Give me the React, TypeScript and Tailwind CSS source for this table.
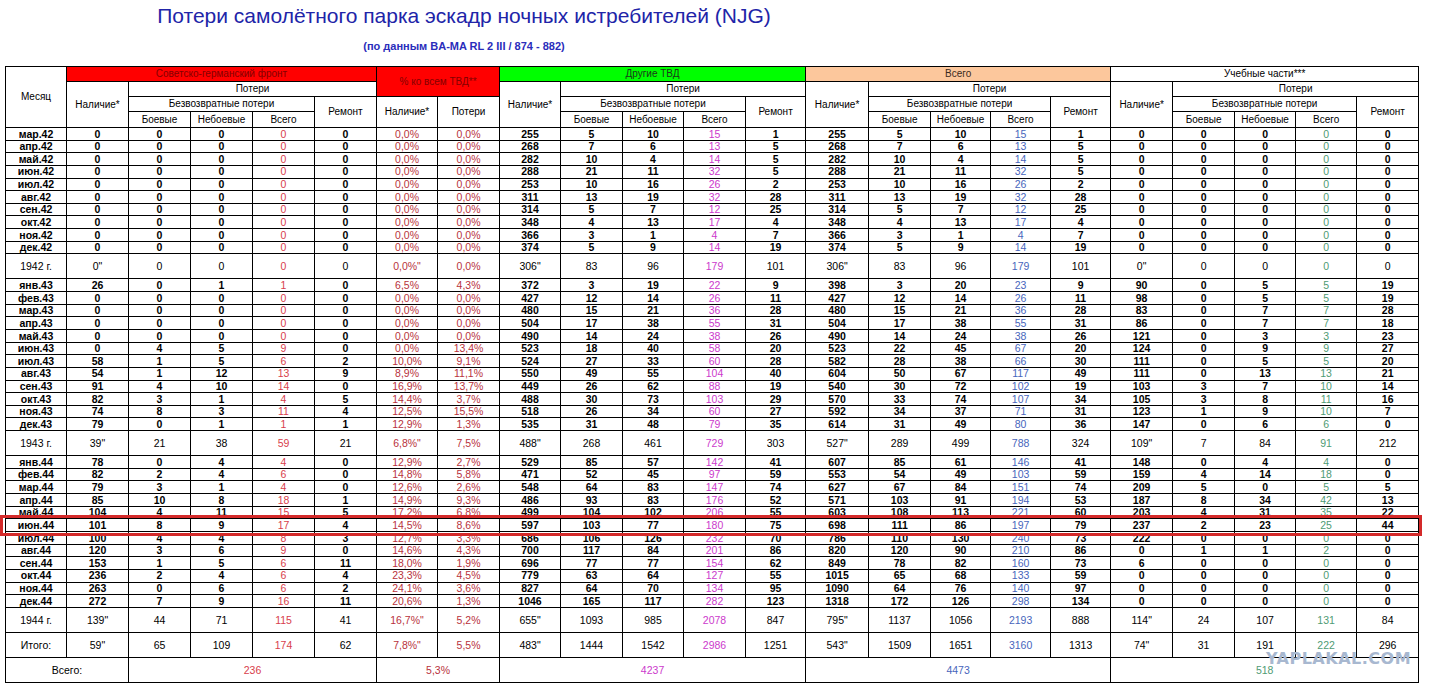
import React from "react"

// month | sov-germ front | % of all | other theatres | total | training units
const raw = `мар.42|0 0 0 0 0|0,0% 0,0%|255 5 10 15 1|255 5 10 15 1|0 0 0 0 0
апр.42|0 0 0 0 0|0,0% 0,0%|268 7 6 13 5|268 7 6 13 5|0 0 0 0 0
май.42|0 0 0 0 0|0,0% 0,0%|282 10 4 14 5|282 10 4 14 5|0 0 0 0 0
июн.42|0 0 0 0 0|0,0% 0,0%|288 21 11 32 5|288 21 11 32 5|0 0 0 0 0
июл.42|0 0 0 0 0|0,0% 0,0%|253 10 16 26 2|253 10 16 26 2|0 0 0 0 0
авг.42|0 0 0 0 0|0,0% 0,0%|311 13 19 32 28|311 13 19 32 28|0 0 0 0 0
сен.42|0 0 0 0 0|0,0% 0,0%|314 5 7 12 25|314 5 7 12 25|0 0 0 0 0
окт.42|0 0 0 0 0|0,0% 0,0%|348 4 13 17 4|348 4 13 17 4|0 0 0 0 0
ноя.42|0 0 0 0 0|0,0% 0,0%|366 3 1 4 7|366 3 1 4 7|0 0 0 0 0
дек.42|0 0 0 0 0|0,0% 0,0%|374 5 9 14 19|374 5 9 14 19|0 0 0 0 0
1942 г.|0" 0 0 0 0|0,0%" 0,0%|306" 83 96 179 101|306" 83 96 179 101|0" 0 0 0 0
янв.43|26 0 1 1 0|6,5% 4,3%|372 3 19 22 9|398 3 20 23 9|90 0 5 5 19
фев.43|0 0 0 0 0|0,0% 0,0%|427 12 14 26 11|427 12 14 26 11|98 0 5 5 19
мар.43|0 0 0 0 0|0,0% 0,0%|480 15 21 36 28|480 15 21 36 28|83 0 7 7 28
апр.43|0 0 0 0 0|0,0% 0,0%|504 17 38 55 31|504 17 38 55 31|86 0 7 7 18
май.43|0 0 0 0 0|0,0% 0,0%|490 14 24 38 26|490 14 24 38 26|121 0 3 3 23
июн.43|0 4 5 9 0|0,0% 13,4%|523 18 40 58 20|523 22 45 67 20|124 0 9 9 27
июл.43|58 1 5 6 2|10,0% 9,1%|524 27 33 60 28|582 28 38 66 30|111 0 5 5 20
авг.43|54 1 12 13 9|8,9% 11,1%|550 49 55 104 40|604 50 67 117 49|111 0 13 13 21
сен.43|91 4 10 14 0|16,9% 13,7%|449 26 62 88 19|540 30 72 102 19|103 3 7 10 14
окт.43|82 3 1 4 5|14,4% 3,7%|488 30 73 103 29|570 33 74 107 34|105 3 8 11 16
ноя.43|74 8 3 11 4|12,5% 15,5%|518 26 34 60 27|592 34 37 71 31|123 1 9 10 7
дек.43|79 0 1 1 1|12,9% 1,3%|535 31 48 79 35|614 31 49 80 36|147 0 6 6 0
1943 г.|39" 21 38 59 21|6,8%" 7,5%|488" 268 461 729 303|527" 289 499 788 324|109" 7 84 91 212
янв.44|78 0 4 4 0|12,9% 2,7%|529 85 57 142 41|607 85 61 146 41|148 0 4 4 0
фев.44|82 2 4 6 0|14,8% 5,8%|471 52 45 97 59|553 54 49 103 59|159 4 14 18 0
мар.44|79 3 1 4 0|12,6% 2,6%|548 64 83 147 74|627 67 84 151 74|209 5 0 5 5
апр.44|85 10 8 18 1|14,9% 9,3%|486 93 83 176 52|571 103 91 194 53|187 8 34 42 13
май.44|104 4 11 15 5|17,2% 6,8%|499 104 102 206 55|603 108 113 221 60|203 4 31 35 22
июн.44|101 8 9 17 4|14,5% 8,6%|597 103 77 180 75|698 111 86 197 79|237 2 23 25 44
июл.44|100 4 4 8 3|12,7% 3,3%|686 106 126 232 70|786 110 130 240 73|222 0 0 0 0
авг.44|120 3 6 9 0|14,6% 4,3%|700 117 84 201 86|820 120 90 210 86|0 1 1 2 0
сен.44|153 1 5 6 11|18,0% 1,9%|696 77 77 154 62|849 78 82 160 73|6 0 0 0 0
окт.44|236 2 4 6 4|23,3% 4,5%|779 63 64 127 55|1015 65 68 133 59|0 0 0 0 0
ноя.44|263 0 6 6 2|24,1% 3,6%|827 64 70 134 95|1090 64 76 140 97|0 0 0 0 0
дек.44|272 7 9 16 11|20,6% 1,3%|1046 165 117 282 123|1318 172 126 298 134|0 0 0 0 0
1944 г.|139" 44 71 115 41|16,7%" 5,2%|655" 1093 985 2078 847|795" 1137 1056 2193 888|114" 24 107 131 84
Итого:|59" 65 109 174 62|7,8%" 5,5%|483" 1444 1542 2986 1251|543" 1509 1651 3160 1313|74" 31 191 222 296`

const rows = raw.split("\n").map(line => {
  const [m, sg, pct, ot, tot, tr] = line.split("|")
  return {
    m,
    sum: m.includes(" г.") || m.startsWith("Итого"),
    groups: [sg, ot, tot, tr].map(g => g.split(" ")),
    pct: pct.split(" "),
  }
})

const widths = [61,62,62,62,62,62,61,62,61,62,61,62,60,63,62,60,60,60,62,62,61,61,62]

// colour of the "Всего" column in each block
const sumColor = ["text-[#d8404c]", "text-[#cc3acc]", "text-[#4866bc]", "text-[#4f9b74]"]

const th = "border border-black p-0 text-center align-middle font-normal text-[10px]"
const td = "border border-black p-0 text-center align-middle"

function Group({ vals, gi, sum }: { vals: string[]; gi: number; sum: boolean }) {
  return (
    <>
      {vals.map((v, i) => (
        <td key={i} className={`${td} ${i === 3 ? sumColor[gi] + " font-normal" : sum ? "font-normal" : "font-bold"}`}>
          {v}
        </td>
      ))}
    </>
  )
}

function SubHead() {
  return (
    <>
      <th className={th}>Боевые</th>
      <th className={th}>Небоевые</th>
      <th className={th}>Всего</th>
    </>
  )
}

export default function App() {
  return (
    <div className="relative w-[1432px] h-[690px] bg-white overflow-hidden" style={{ fontFamily: '"Liberation Sans", Arial, sans-serif' }}>
      <div className="w-[928px] h-[66px] text-center">
        <h1 className="pt-[3px] text-[21px] leading-[26px] text-[#2124a8]">
          Потери самолётного парка эскадр ночных истребителей (NJG)
        </h1>
        <p className="mt-[11px] text-[11px] leading-[13px] font-bold text-[#2a2dbb]">
          (по данным BA-MA RL 2 III / 874 - 882)
        </p>
      </div>

      <table className="ml-[5px] w-[1413px] table-fixed border-collapse text-[10.5px] leading-none text-black">
        <colgroup>
          {widths.map((w, i) => <col key={i} style={{ width: w }} />)}
        </colgroup>
        <thead>
          <tr className="h-[15px]">
            <th rowSpan={4} className={`${th} font-bold`}>Месяц</th>
            <th colSpan={5} className={`${th} bg-[#ff0000] text-[#840000]`}>Советско-германский фронт</th>
            <th colSpan={2} rowSpan={2} className={`${th} bg-[#ff0000] text-[#840000]`}>% ко всем ТВД**</th>
            <th colSpan={5} className={`${th} bg-[#00ff00] text-[#1a3a1a]`}>Другие ТВД</th>
            <th colSpan={5} className={`${th} bg-[#fcc79c] text-[#3a2a20]`}>Всего</th>
            <th colSpan={5} className={th}>Учебные части***</th>
          </tr>
          <tr className="h-[15px]">
            <th rowSpan={3} className={`${th} font-bold`}>Наличие*</th>
            <th colSpan={4} className={th}>Потери</th>
            {[0, 1, 2].map(i => (
              <React.Fragment key={i}>
                <th rowSpan={3} className={`${th} font-bold`}>Наличие*</th>
                <th colSpan={4} className={th}>Потери</th>
              </React.Fragment>
            ))}
          </tr>
          <tr className="h-[15px]">
            <th colSpan={3} className={th}>Безвозвратные потери</th>
            <th rowSpan={2} className={`${th} font-bold`}>Ремонт</th>
            <th rowSpan={2} className={`${th} font-bold`}>Наличие*</th>
            <th rowSpan={2} className={`${th} font-bold`}>Потери</th>
            {[0, 1, 2].map(i => (
              <React.Fragment key={i}>
                <th colSpan={3} className={th}>Безвозвратные потери</th>
                <th rowSpan={2} className={`${th} font-bold`}>Ремонт</th>
              </React.Fragment>
            ))}
          </tr>
          <tr className="h-[16px]">
            <SubHead />
            <SubHead />
            <SubHead />
            <SubHead />
          </tr>
        </thead>
        <tbody>
          {rows.map(r => (
            <tr key={r.m} className={r.sum ? "h-[25px]" : "h-[12.65px]"}>
              <td className={`${td} ${r.sum ? "font-normal" : "font-bold"}`}>{r.m}</td>
              <Group vals={r.groups[0]} gi={0} sum={r.sum} />
              {r.pct.map((p, i) => (
                <td key={i} className={`${td} text-[#b8323c]`}>{p}</td>
              ))}
              <Group vals={r.groups[1]} gi={1} sum={r.sum} />
              <Group vals={r.groups[2]} gi={2} sum={r.sum} />
              <Group vals={r.groups[3]} gi={3} sum={r.sum} />
            </tr>
          ))}
          <tr className="h-[25px]">
            <td colSpan={2} className={td}>Всего:</td>
            <td colSpan={4} className={`${td} text-[#d8404c]`}>236</td>
            <td colSpan={2} className={`${td} text-[#b8323c]`}>5,3%</td>
            <td colSpan={5} className={`${td} text-[#cc3acc]`}>4237</td>
            <td colSpan={5} className={`${td} text-[#4866bc]`}>4473</td>
            <td colSpan={5} className={`${td} text-[#4f9b74]`}>518</td>
          </tr>
        </tbody>
      </table>

      {/* highlight around June 1944 */}
      <div className="absolute left-0 top-[515px] w-[1422px] h-[21px] border-[3px] border-[#d42a2a]" />

      {/* watermark */}
      <div className="absolute left-[1266px] top-[651px] text-[16px] leading-none font-bold tracking-[0.5px] text-[#a8b8d0]" style={{ fontFamily: '"DejaVu Sans", sans-serif' }}>
        YAPLAKAL.COM
      </div>
    </div>
  )
}
